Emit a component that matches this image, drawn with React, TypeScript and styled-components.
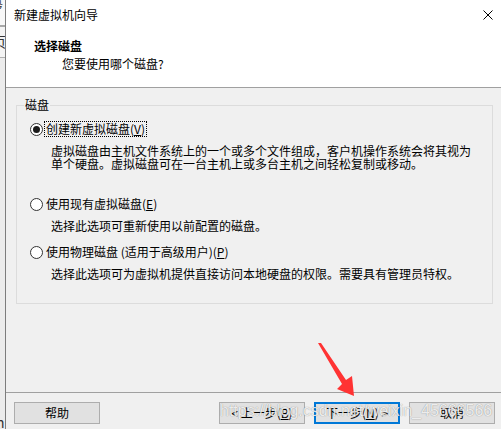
import React from "react";
import styled, { createGlobalStyle } from "styled-components";

const GlobalStyle = createGlobalStyle`
  html, body {
    margin: 0;
    padding: 0;
    background: #f0f0f0;
  }
  body {
    font-family: "Noto Sans CJK SC", "Liberation Sans", sans-serif;
    font-size: 12px;
    color: #000;
  }
  * {
    box-sizing: border-box;
  }
`;

const Screen = styled.div`
  position: relative;
  display: flex;
  width: 501px;
  height: 429px;
  overflow: hidden;
`;

// slice of the window that lies behind the wizard
const BackStrip = styled.div`
  width: 5px;
  display: flex;
  flex-direction: column;
  background: #ebebeb;
`;

const StripPiece = styled.div<{ $h: number; $bg: string }>`
  height: ${(p) => p.$h}px;
  background: ${(p) => p.$bg};
  overflow: hidden;
  flex-shrink: 0;
`;

const StripGlyph = styled.span<{ $shift: number; $size: number }>`
  display: block;
  margin-left: ${(p) => p.$shift}px;
  font-size: ${(p) => p.$size}px;
  line-height: ${(p) => p.$size}px;
  white-space: nowrap;
  color: #333;
`;

const StripFill = styled.div`
  flex: 1;
  display: flex;
  flex-direction: column;
  justify-content: flex-end;
  overflow: hidden;
  background: #ececec;
`;

const Window = styled.div`
  flex: 1;
  display: flex;
  flex-direction: column;
  border-left: 1px solid #7d7d7d;
  background: #f0f0f0;
`;

const TitleBar = styled.div`
  height: 30px;
  display: flex;
  align-items: center;
  justify-content: space-between;
  padding: 0 8px 0 8px;
  background: #fff;
`;

const TitleText = styled.span`
  font-size: 12px;
  line-height: 14px;
`;

const Header = styled.div`
  height: 58px;
  padding: 9px 0 0 28px;
  background: #fff;
  border-bottom: 1px solid #a0a0a0;
`;

const HeaderTitle = styled.div`
  font-weight: bold;
  font-size: 12px;
  line-height: 14px;
`;

const HeaderSub = styled.div`
  margin-top: 4px;
  padding-left: 28px;
  line-height: 14px;
`;

const Body = styled.div`
  flex: 1;
  padding: 10px 8px 0 10px;
`;

const Group = styled.fieldset`
  margin: 0;
  padding: 10px 8px 23px 7px;
  border: 1px solid #dcdcdc;
  min-width: 0;
`;

const Legend = styled.legend`
  padding: 0 1px;
  line-height: 14px;
`;

const Option = styled.div<{ $gap: number }>`
  margin-bottom: ${(p) => p.$gap}px;
`;

const OptionRow = styled.div`
  display: flex;
  align-items: center;
  height: 14px;
`;

const Radio = styled.span<{ $checked?: boolean }>`
  position: relative;
  width: 13px;
  height: 13px;
  margin: 0 2px 0 6px;
  border-radius: 50%;
  border: 1px solid #333;
  background: #fff;
  flex-shrink: 0;
  &::after {
    content: "";
    display: ${(p) => (p.$checked ? "block" : "none")};
    position: absolute;
    left: 2px;
    top: 2px;
    width: 7px;
    height: 7px;
    border-radius: 50%;
    background: #1a1a1a;
  }
`;

const OptionLabel = styled.span<{ $focused?: boolean }>`
  padding: 0 1px;
  line-height: 14px;
  outline: ${(p) => (p.$focused ? "1px dotted #000" : "none")};
  white-space: nowrap;
`;

const Desc = styled.div`
  margin: 8px 0 0 27px;
  width: 425px;
  line-height: 13px;
`;

const Footer = styled.div`
  height: 37px;
  display: flex;
  align-items: flex-start;
  padding: 9px 6px 0 8px;
  border-top: 1px solid #a0a0a0;
  gap: 9px;
`;

const Spacer = styled.div`
  flex: 1;
`;

const Button = styled.button<{ $primary?: boolean }>`
  width: 86px;
  height: 22px;
  padding: 0;
  font-family: inherit;
  font-size: 12px;
  line-height: 14px;
  color: #000;
  background: #e1e1e1;
  border: ${(p) => (p.$primary ? "2px solid #0078d7" : "1px solid #adadad")};
  white-space: nowrap;
`;

const Watermark = styled.div`
  position: absolute;
  left: 220px;
  top: 402px;
  font-family: "Liberation Sans", Arial, sans-serif;
  font-size: 16px;
  line-height: 18px;
  color: rgba(255, 255, 255, 0.85);
  text-shadow: 0 0 1px rgba(0, 0, 0, 0.45);
  white-space: nowrap;
  pointer-events: none;
`;

const ArrowLayer = styled.svg`
  position: absolute;
  left: 0;
  top: 0;
  pointer-events: none;
`;

const CloseIcon = () => (
  <svg width="10" height="10" viewBox="0 0 10 10">
    <path d="M0.5 0.5 L9.5 9.5 M9.5 0.5 L0.5 9.5" stroke="#000" strokeWidth="1" fill="none" />
  </svg>
);

export default function App() {
  return (
    <>
      <GlobalStyle />
      <Screen>
        <BackStrip>
          <StripPiece $h={9} $bg="#f6f6f6">
            <StripGlyph $shift={-9} $size={12}>设</StripGlyph>
          </StripPiece>
          <StripPiece $h={16} $bg="#f8f8f8" />
          <StripPiece $h={2} $bg="#a8a8a8" />
          <StripPiece $h={30} $bg="#f4f4f4">
            <StripGlyph $shift={-8} $size={14} style={{ marginTop: 7 }}>页</StripGlyph>
          </StripPiece>
          <StripPiece $h={1} $bg="#b0b0b0" />
          <StripFill>
            <StripGlyph $shift={-4} $size={14}>n</StripGlyph>
          </StripFill>
        </BackStrip>

        <Window>
          <TitleBar>
            <TitleText>新建虚拟机向导</TitleText>
            <CloseIcon />
          </TitleBar>

          <Header>
            <HeaderTitle>选择磁盘</HeaderTitle>
            <HeaderSub>您要使用哪个磁盘?</HeaderSub>
          </Header>

          <Body>
            <Group>
              <Legend>磁盘</Legend>
              <Option $gap={27}>
                <OptionRow>
                  <Radio $checked />
                  <OptionLabel $focused>
                    创建新虚拟磁盘(<u>V</u>)
                  </OptionLabel>
                </OptionRow>
                <Desc>
                  虚拟磁盘由主机文件系统上的一个或多个文件组成，客户机操作系统会将其视为单个硬盘。虚拟磁盘可在一台主机上或多台主机之间轻松复制或移动。
                </Desc>
              </Option>
              <Option $gap={13}>
                <OptionRow>
                  <Radio />
                  <OptionLabel>
                    使用现有虚拟磁盘(<u>E</u>)
                  </OptionLabel>
                </OptionRow>
                <Desc>选择此选项可重新使用以前配置的磁盘。</Desc>
              </Option>
              <Option $gap={0}>
                <OptionRow>
                  <Radio />
                  <OptionLabel>
                    使用物理磁盘 (适用于高级用户)(<u>P</u>)
                  </OptionLabel>
                </OptionRow>
                <Desc>选择此选项可为虚拟机提供直接访问本地硬盘的权限。需要具有管理员特权。</Desc>
              </Option>
            </Group>
          </Body>

          <Footer>
            <Button>帮助</Button>
            <Spacer />
            <Button>
              &lt; 上一步(<u>B</u>)
            </Button>
            <Button $primary>
              下一步(<u>N</u>) &gt;
            </Button>
            <Button>取消</Button>
          </Footer>
        </Window>

        <ArrowLayer width="501" height="429" viewBox="0 0 501 429">
          <polygon
            points="318,343 321,343 346,380 352,376 354,396 337,389 342,384"
            fill="#ff3333"
          />
        </ArrowLayer>
        <Watermark>https://blog.csdn.net/weixin_45666566</Watermark>
      </Screen>
    </>
  );
}
